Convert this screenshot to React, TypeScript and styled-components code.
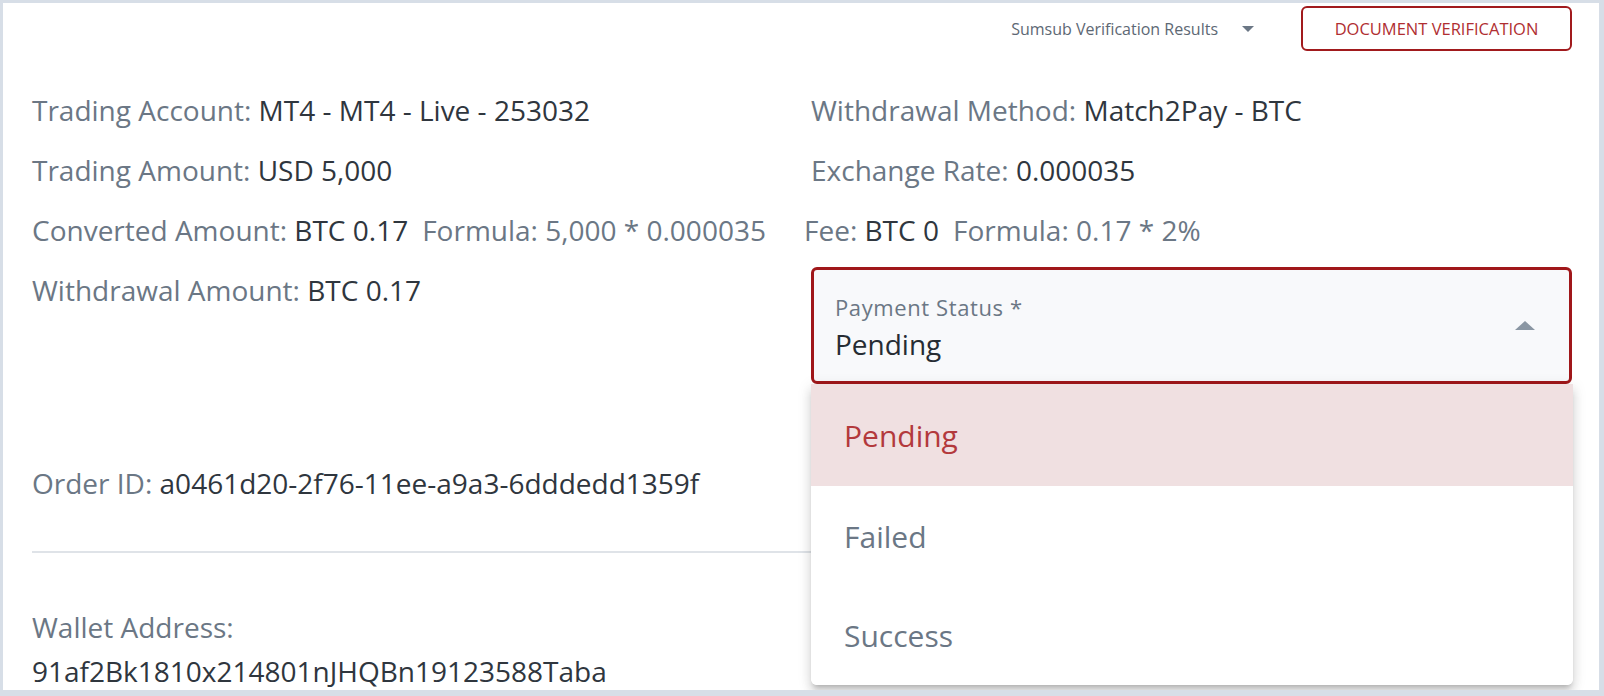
import React from "react";
import styled, { createGlobalStyle } from "styled-components";

const GlobalStyle = createGlobalStyle`
  html, body {
    margin: 0;
    padding: 0;
    background: #d7dee7;
  }
  * { box-sizing: border-box; }
`;

const Frame = styled.div`
  width: 1604px;
  height: 696px;
  padding: 3px 5px 6px 3px;
  background: #d7dee7;
`;

const Card = styled.div`
  height: 100%;
  background: #ffffff;
  padding: 3px 27px 0 29px;
  overflow: hidden;
  font-family: "Open Sans", "Noto Sans", sans-serif;
  color: #6b7785;
`;

const Header = styled.div`
  display: flex;
  justify-content: flex-end;
  align-items: center;
  height: 45px;
  gap: 47px;
`;

const SumsubToggle = styled.div`
  display: flex;
  align-items: center;
  gap: 24px;
  font-size: 16px;
  color: #5d6874;
`;

const Caret = styled.span<{ up?: boolean; w: number; h: number; color: string }>`
  display: inline-block;
  width: 0;
  height: 0;
  border-left: ${(p) => p.w / 2}px solid transparent;
  border-right: ${(p) => p.w / 2}px solid transparent;
  ${(p) =>
    p.up
      ? `border-bottom: ${p.h}px solid ${p.color};`
      : `border-top: ${p.h}px solid ${p.color};`}
`;

const OutlineButton = styled.button`
  width: 271px;
  height: 45px;
  border: 2px solid #a11a1d;
  border-radius: 6px;
  background: #fff;
  color: #b02e31;
  font-family: "Open Sans", "Noto Sans", sans-serif;
  font-size: 16.5px;
  font-weight: 500;
  text-transform: uppercase;
  padding: 0;
`;

const InfoGrid = styled.div`
  display: grid;
  grid-template-columns: 779px 1fr;
  margin-top: 29px;
`;

const Field = styled.div<{ shift?: number }>`
  height: 60px;
  line-height: 60px;
  font-size: 28px;
  white-space: nowrap;
  margin-left: ${(p) => p.shift ?? 0}px;
`;

const Value = styled.span`
  color: #2f363e;
`;

const Note = styled.span`
  margin-left: 14px;
`;

const SelectCell = styled.div`
  position: relative;
  margin-top: 7px;
`;

const SelectBox = styled.div`
  height: 117px;
  border: 3px solid #a0171a;
  border-radius: 6px;
  background: #f8f9fb;
  display: flex;
  align-items: center;
  padding: 0 34px 0 21px;
`;

const SelectText = styled.div`
  flex: 1;
  display: flex;
  flex-direction: column;
  gap: 6px;
  padding-top: 4px;
`;

const FloatLabel = styled.div`
  font-size: 22px;
  letter-spacing: 0.6px;
  line-height: 26px;
  color: #6b7785;
`;

const SelectValue = styled.div`
  font-size: 28px;
  line-height: 36px;
  color: #262c33;
`;

const Menu = styled.ul`
  position: absolute;
  top: 100%;
  left: 0;
  right: -1px;
  margin: 0;
  padding: 0;
  list-style: none;
  background: #fff;
  border-radius: 0 0 6px 6px;
  box-shadow: 0 5px 5px -3px rgba(0, 0, 0, 0.2), 0 8px 10px 1px rgba(0, 0, 0, 0.1),
    0 3px 14px 2px rgba(0, 0, 0, 0.08);
  overflow: hidden;
  z-index: 2;
`;

const MenuItem = styled.li<{ selected?: boolean; h: number }>`
  height: ${(p) => p.h}px;
  display: flex;
  align-items: center;
  padding-left: 33px;
  font-size: 30px;
  background: ${(p) => (p.selected ? "#f0e0e1" : "#fff")};
  color: ${(p) => (p.selected ? "#b3393c" : "#6b7785")};
`;

const OrderRow = styled.div`
  height: 60px;
  line-height: 60px;
  font-size: 28px;
  margin-top: 69px;
  white-space: nowrap;
`;

const Divider = styled.hr`
  border: none;
  height: 2px;
  background: #dfe3e8;
  margin: 38px 0 0 0;
`;

const WalletLabel = styled.div`
  font-size: 28px;
  line-height: 40px;
  margin-top: 54px;
`;

const WalletValue = styled.div`
  font-size: 28px;
  line-height: 36px;
  margin-top: 6px;
  color: #2f363e;
`;

export default function App() {
  return (
    <>
      <GlobalStyle />
      <Frame>
        <Card>
          <Header>
            <SumsubToggle>
              <span>Sumsub Verification Results</span>
              <Caret w={12} h={6} color="#6b7785" />
            </SumsubToggle>
            <OutlineButton>Document Verification</OutlineButton>
          </Header>

          <InfoGrid>
            <Field>
              Trading Account: <Value>MT4 - MT4 - Live - 253032</Value>
            </Field>
            <Field>
              Withdrawal Method: <Value>Match2Pay - BTC</Value>
            </Field>
            <Field>
              Trading Amount: <Value>USD 5,000</Value>
            </Field>
            <Field>
              Exchange Rate: <Value>0.000035</Value>
            </Field>
            <Field>
              Converted Amount: <Value>BTC 0.17</Value>
              <Note>Formula: 5,000 * 0.000035</Note>
            </Field>
            <Field shift={-7}>
              Fee: <Value>BTC 0</Value>
              <Note>Formula: 0.17 * 2%</Note>
            </Field>
            <Field>
              Withdrawal Amount: <Value>BTC 0.17</Value>
            </Field>
            <SelectCell>
              <SelectBox>
                <SelectText>
                  <FloatLabel>Payment Status *</FloatLabel>
                  <SelectValue>Pending</SelectValue>
                </SelectText>
                <Caret up w={20} h={9} color="#8a96a3" />
              </SelectBox>
              <Menu>
                <MenuItem selected h={102}>Pending</MenuItem>
                <MenuItem h={100}>Failed</MenuItem>
                <MenuItem h={99}>Success</MenuItem>
              </Menu>
            </SelectCell>
          </InfoGrid>

          <OrderRow>
            Order ID: <Value>a0461d20-2f76-11ee-a9a3-6dddedd1359f</Value>
          </OrderRow>
          <Divider />
          <WalletLabel>Wallet Address:</WalletLabel>
          <WalletValue>91af2Bk1810x214801nJHQBn19123588Taba</WalletValue>
        </Card>
      </Frame>
    </>
  );
}
